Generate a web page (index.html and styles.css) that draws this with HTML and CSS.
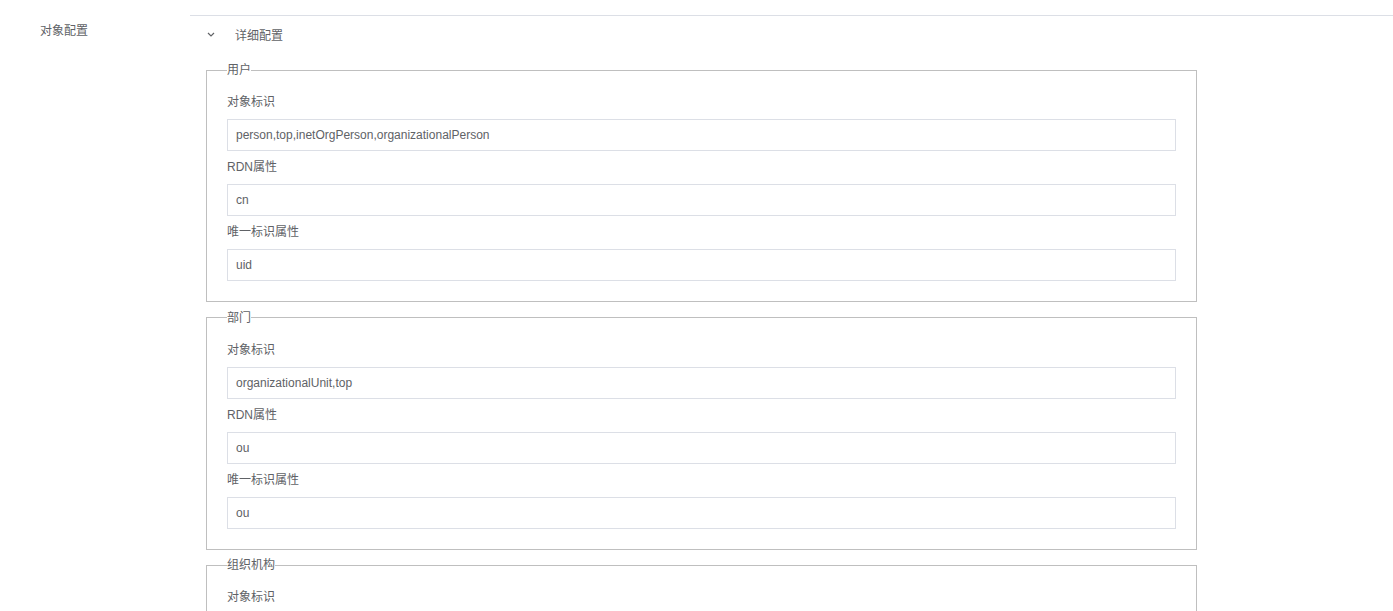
FILE: index.html
```html
<!DOCTYPE html>
<html lang="zh-CN">
<head>
    <meta charset="UTF-8">
    <meta name="viewport" content="width=device-width, initial-scale=1.0">
    <title>对象配置</title>
    <link rel="stylesheet" href="styles.css">
</head>
<body>
    <div class="form-row">
        <div class="row-label">对象配置</div>
        <div class="row-body">
            <div class="collapse-header">
                <svg class="chevron" width="8" height="5" viewBox="0 0 8 5">
                    <path d="M1 1 L4 4 L7 1" fill="none" stroke="#606266" stroke-width="1.2"/>
                </svg>
                <span>详细配置</span>
            </div>
            <div class="collapse-content">
                <fieldset class="group">
                    <legend>用户</legend>
                    <div class="field-label">对象标识</div>
                    <input class="field-input" type="text" value="person,top,inetOrgPerson,organizationalPerson">
                    <div class="field-label">RDN属性</div>
                    <input class="field-input" type="text" value="cn">
                    <div class="field-label">唯一标识属性</div>
                    <input class="field-input" type="text" value="uid">
                </fieldset>

                <fieldset class="group">
                    <legend>部门</legend>
                    <div class="field-label">对象标识</div>
                    <input class="field-input" type="text" value="organizationalUnit,top">
                    <div class="field-label">RDN属性</div>
                    <input class="field-input" type="text" value="ou">
                    <div class="field-label">唯一标识属性</div>
                    <input class="field-input" type="text" value="ou">
                </fieldset>

                <fieldset class="group">
                    <legend>组织机构</legend>
                    <div class="field-label">对象标识</div>
                </fieldset>
            </div>
        </div>
    </div>
</body>
</html>
```

FILE: styles.css
```css
html {
    overflow: hidden;
}
body {
    font-family: 'Liberation Sans', 'Noto Sans CJK SC', sans-serif;
    font-size: 12px;
    color: #606266;
    background-color: #fff;
    margin: 0;
}
.form-row {
    display: flex;
    padding-top: 15px;
}
.row-label {
    width: 150px;
    padding-left: 40px;
    padding-top: 6px;
    line-height: 20px;
}
.row-body {
    flex: 1;
    border-top: 1px solid #dcdfe6;
}
.collapse-header {
    display: flex;
    align-items: center;
    height: 36px;
    padding-left: 17px;
    font-size: 12px;
}
.chevron {
    margin-right: 20px;
    margin-top: 1px;
}
.collapse-content {
    padding: 10px 0 0 16px;
}
.group {
    width: 991px;
    box-sizing: border-box;
    margin: 0 0 7.5px 0;
    padding: 8px 20px 20px 20px;
    border: 1px solid #bfbfbf;
}
.group legend {
    padding: 0;
    line-height: 16px;
    font-size: 12px;
    color: #606266;
}
.field-label {
    line-height: 20px;
    padding: 6px 0 7px 0;
}
.field-input {
    display: block;
    width: 100%;
    height: 32px;
    box-sizing: border-box;
    border: 1px solid #dcdfe6;
    padding: 0 8px;
    font-family: 'Liberation Sans', 'Noto Sans CJK SC', sans-serif;
    font-size: 12px;
    color: #606266;
    outline: none;
    margin: 0;
}
```
